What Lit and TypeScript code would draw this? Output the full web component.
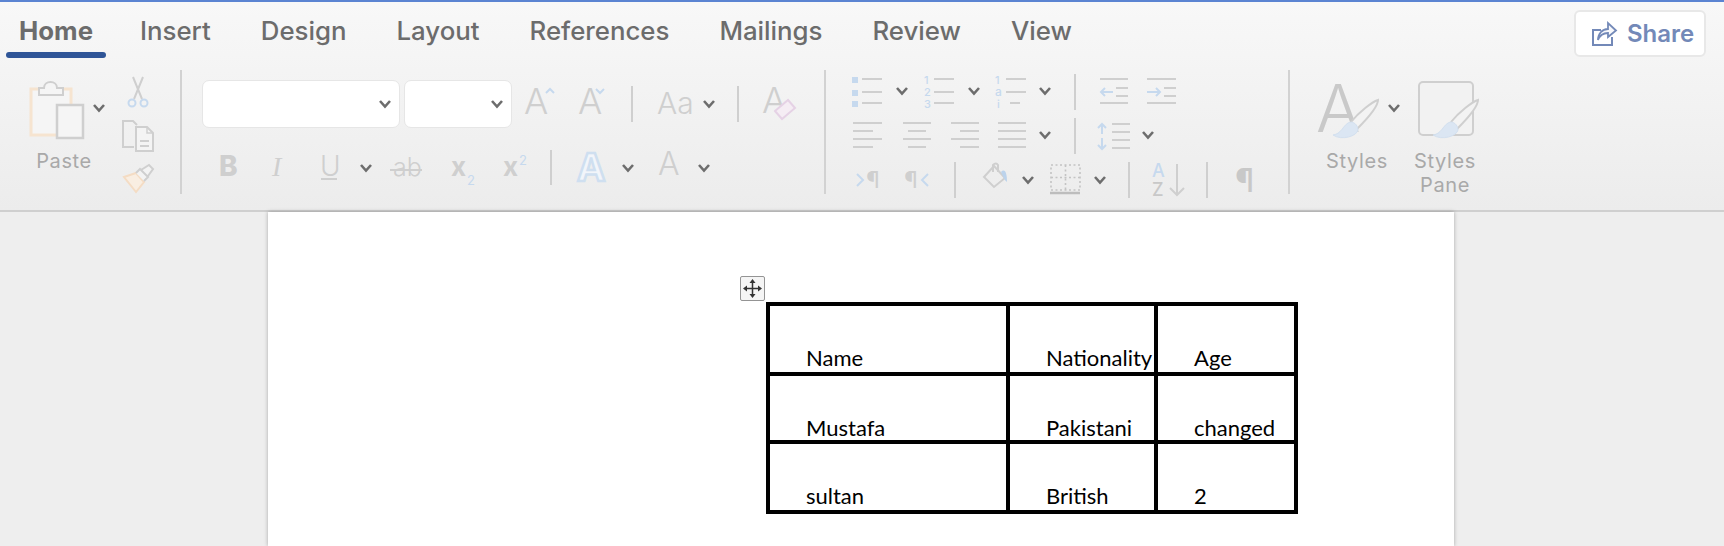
import { LitElement, css, html, svg } from 'lit';
import { customElement } from 'lit/decorators.js';

const TABS = ['Home', 'Insert', 'Design', 'Layout', 'References', 'Mailings', 'Review', 'View'];
const ROWS = [
  ['Name', 'Nationality', 'Age'],
  ['Mustafa', 'Pakistani', 'changed'],
  ['sultan', 'British', '2'],
];

const GRAY = '#cfcfcf';
const BLUE = '#c6d9ee';

// all ribbon icons are drawn in page coordinates, each svg's viewBox is its window on the page
const chev = (x: number, y: number) =>
  svg`<path d="M${x} ${y}l5 5.5l5-5.5" fill="none" stroke="#6d6d6d" stroke-width="2.6"/>`;
const vline = (x: number, y1: number, y2: number) =>
  svg`<path d="M${x} ${y1}V${y2}" stroke="${GRAY}" stroke-width="2"/>`;
const hlines = (x1: number, x2: number, ys: number[], color = GRAY) =>
  ys.map((y) => svg`<path d="M${x1} ${y}H${x2}" stroke="${color}" stroke-width="2"/>`);
const glyph = (x: number, y: number, size: number, text: string, fill = GRAY, weight = 300) =>
  svg`<text x="${x}" y="${y}" font-size="${size}" font-weight="${weight}" fill="${fill}">${text}</text>`;
const brush = (dx: number) => svg`<g transform="translate(${dx} 0)">
  <path d="M1351 122C1359 112 1372 102 1378 100C1378 106 1368 118 1357 129" fill="#f3f3f3" stroke="${GRAY}" stroke-width="2"/>
  <path d="M1333 135C1341 134 1343 126 1348 123C1353 120 1358 125 1358 130C1357 136 1342 141 1333 135Z" fill="#dbe6f3" stroke="#d3e0ef" stroke-width="1"/>
</g>`;

@customElement('app-root')
export class AppRoot extends LitElement {
  static styles = css`
    :host {
      display: block;
      width: 1724px;
      height: 546px;
      overflow: hidden;
      background: #eeeeee;
      font-family: Inter, 'Noto Sans', sans-serif;
    }
    svg {
      display: block;
      overflow: visible;
      flex: none;
    }
    svg text {
      font-family: Inter, 'Noto Sans', sans-serif;
    }
    svg text.serif {
      font-family: 'Liberation Serif', serif;
    }
    .top {
      border-top: 2px solid #5b84d2;
      border-bottom: 2px solid #cfcfcf;
      background: linear-gradient(#f8f8f8, #ececec);
      height: 208px;
    }
    .tabbar {
      display: flex;
      justify-content: space-between;
      height: 60px;
    }
    .tabs {
      display: flex;
      gap: 50px;
      padding-left: 19px;
      font-size: 25.8px;
      font-weight: 500;
      color: #6c6c6c;
    }
    .tab {
      position: relative;
      line-height: 30px;
      padding-top: 14px;
    }
    .tab.active {
      font-weight: 700;
      margin-right: -3px;
    }
    .tab.active::after {
      content: '';
      position: absolute;
      left: -13px;
      right: -13px;
      top: 50px;
      height: 6px;
      border-radius: 3px;
      background: #2f5597;
    }
    .share {
      display: flex;
      align-items: center;
      gap: 11px;
      box-sizing: border-box;
      width: 132px;
      height: 47px;
      margin: 8px 18px 0 0;
      padding-left: 16px;
      background: #fff;
      border: 2px solid #e8e8e8;
      border-radius: 6px;
      color: #7389b8;
      font-size: 24px;
      font-weight: 600;
    }
    .ribbon {
      display: flex;
      height: 124px;
      margin-top: 8px;
    }
    .group {
      box-sizing: border-box;
      height: 124px;
      border-right: 2px solid #d2d2d2;
      flex: none;
    }
    .clip {
      display: flex;
      width: 182px;
    }
    .paste {
      width: 122px;
    }
    .label {
      font-size: 20px;
      line-height: 24px;
      letter-spacing: 0.6px;
      color: #a9a9a9;
      text-align: center;
    }
    .paste .label {
      width: 128px;
    }
    .font {
      width: 644px;
      padding: 10px 0 0 20px;
    }
    .font-top {
      display: flex;
      height: 47px;
    }
    .select {
      display: flex;
      align-items: center;
      justify-content: flex-end;
      box-sizing: border-box;
      height: 48px;
      margin-right: 4px;
      padding-right: 8px;
      background: #fff;
      border: 1px solid #e6e6e6;
      border-radius: 7px;
    }
    .select.face {
      width: 199px;
    }
    .select.size {
      width: 109px;
      margin-right: 0;
    }
    .font-bottom {
      margin-top: 23px;
    }
    .para {
      width: 464px;
    }
    .styles {
      display: flex;
      gap: 10px;
      padding-left: 28px;
    }
    .style-btn {
      width: 78px;
    }
    .page {
      box-sizing: border-box;
      width: 1186px;
      height: 334px;
      margin-left: 268px;
      padding: 90px 0 0 498px;
      background: #fff;
      box-shadow: 0 0 4px rgba(0, 0, 0, 0.3);
    }
    .table-wrap {
      position: relative;
      width: 532px;
    }
    .handle {
      position: absolute;
      left: -26px;
      top: -26px;
      box-sizing: border-box;
      width: 25px;
      height: 25px;
      display: flex;
      align-items: center;
      justify-content: center;
      background: #f5f5f5;
      border: 1.5px solid #949494;
      border-radius: 2px;
    }
    .table {
      display: grid;
      grid-template-columns: 236px 144px 136px;
      grid-template-rows: 66px 64px 66px;
      gap: 4px;
      padding: 4px;
      width: 532px;
      box-sizing: border-box;
      background: #000;
      font-family: Lato, 'Open Sans', sans-serif;
      font-size: 22px;
      line-height: 24px;
      color: #000;
    }
    .cell {
      display: flex;
      align-items: flex-end;
      padding: 0 0 2.5px 36px;
      background: #fff;
      white-space: nowrap;
    }
    .cell.mid {
      padding-bottom: 0.5px;
    }
  `;

  render() {
    return html`
      <div class="top">
        <div class="tabbar">
          <div class="tabs">
            ${TABS.map((t, i) => html`<div class="tab ${i === 0 ? 'active' : ''}">${t}</div>`)}
          </div>
          <div class="share">
            <svg width="24" height="26" viewBox="1591 22 24 26">
              <path d="M1600 31H1592V46H1611V38" fill="none" stroke="#7389b8" stroke-width="2"/>
              <path d="M1597 41C1597 35 1601 30 1607 30V24L1615 31.500L1607 38V34C1603 34 1599 36 1597 41Z" fill="#f7f8fb" stroke="#7389b8" stroke-width="1.800"/>
            </svg>
            Share
          </div>
        </div>
        <div class="ribbon">
          <div class="group clip">
            <div class="paste">
              <svg width="122" height="79" viewBox="0 70 122 79">
                <rect x="31" y="89" width="40" height="46" fill="#f5f5f5" stroke="#f6e4d0" stroke-width="3"/>
                <path d="M39 95V88H44C44 80 57 80 57 88H63V95Z" fill="#f5f5f5" stroke="${GRAY}" stroke-width="2"/>
                <rect x="57" y="105" width="26" height="33" fill="#f5f5f5" stroke="${GRAY}" stroke-width="2.500"/>
                ${chev(94, 105)}
              </svg>
              <div class="label">Paste</div>
            </div>
            <svg width="58" height="124" viewBox="122 70 58 124">
              <path d="M133 77L142 99M143 77L134 99" stroke="${GRAY}" stroke-width="2" fill="none"/>
              <circle cx="132" cy="103" r="3.500" fill="none" stroke="${BLUE}" stroke-width="2"/>
              <circle cx="144" cy="103" r="3.500" fill="none" stroke="${BLUE}" stroke-width="2"/>
              <path d="M134 147H123V121H133L137 125" fill="none" stroke="${GRAY}" stroke-width="2"/>
              <path d="M136 127H147L153 133V151H136Z" fill="#f4f4f4" stroke="${GRAY}" stroke-width="2"/>
              <path d="M147 127V133H153" fill="none" stroke="${GRAY}" stroke-width="1.500"/>
              ${hlines(140, 149, [141, 146])}
              <path d="M124 177L136 173L144 182L136 192Z" fill="#f9eee2" stroke="#f4dcc4" stroke-width="2"/>
              <path d="M136 173L140 169L148 177L144 181M141 170L149 165L153 169L148 176" fill="#f3f3f3" stroke="${GRAY}" stroke-width="2"/>
            </svg>
          </div>

          <div class="group font">
            <div class="font-top">
              <div class="select face">
                <svg width="12" height="8" viewBox="378 100 12 8">${chev(379, 101)}</svg>
              </div>
              <div class="select size">
                <svg width="12" height="8" viewBox="491 100 12 8">${chev(492, 101)}</svg>
              </div>
              <svg width="312" height="47" viewBox="513 80 312 47">
                ${glyph(525, 114, 36, 'A')}
                <path d="M547 93l4-4l4 4" fill="none" stroke="${BLUE}" stroke-width="2"/>
                ${glyph(579, 114, 36, 'A')}
                <path d="M597 89l4 4l4-4" fill="none" stroke="${BLUE}" stroke-width="2"/>
                ${vline(633, 86, 122)}
                ${glyph(658, 114, 30, 'Aa')}
                ${chev(705, 101)}
                ${vline(739, 86, 122)}
                ${glyph(763, 113, 36, 'A')}
                <path d="M776 111L789 100L796 108L783 119Z" fill="#f5edf4" stroke="#e5d2e5" stroke-width="2"/>
              </svg>
            </div>
            <div class="font-bottom">
              <svg width="622" height="40" viewBox="202 150 622 40">
                ${glyph(219, 176, 28, 'B', GRAY, 800)}
                <text class="serif" x="272" y="176" font-size="28" font-style="italic" fill="${GRAY}">I</text>
                ${glyph(320, 176, 28, 'U')}
                <path d="M321 179H337" stroke="${GRAY}" stroke-width="2"/>
                ${chev(361, 165)}
                ${glyph(393, 176, 25, 'ab')}
                <path d="M390 170H422" stroke="${GRAY}" stroke-width="2"/>
                ${glyph(451, 176, 26, 'x', GRAY, 700)}
                ${glyph(467, 185, 13, '2', BLUE, 400)}
                ${glyph(503, 176, 26, 'x', GRAY, 700)}
                ${glyph(519, 165, 13, '2', BLUE, 400)}
                ${vline(551, 150, 185)}
                <text x="577" y="181" font-size="38" font-weight="700" fill="#f2f5fa" stroke="#cfdff0" stroke-width="2.500">A</text>
                ${chev(623, 165)}
                ${glyph(658, 175, 32, 'A')}
                ${chev(699, 165)}
              </svg>
            </div>
          </div>

          <div class="group para">
            <svg width="462" height="124" viewBox="826 70 462 124">
              <rect x="852" y="77" width="6" height="6" fill="${BLUE}"/>
              <rect x="852" y="90" width="6" height="6" fill="${BLUE}"/>
              <rect x="852" y="101" width="6" height="6" fill="${BLUE}"/>
              ${hlines(862, 882, [79, 92, 103])}
              ${chev(897, 88)}
              ${glyph(924, 84, 11, '1', BLUE, 500)} ${glyph(924, 96, 11, '2', BLUE, 500)} ${glyph(924, 108, 11, '3', BLUE, 500)}
              ${hlines(934, 954, [79, 92, 103])}
              ${chev(969, 88)}
              ${glyph(995, 84, 11, '1', BLUE, 500)} ${glyph(995, 96, 12, 'a', BLUE, 500)} ${glyph(997, 108, 11, 'i', BLUE, 500)}
              ${hlines(1006, 1026, [79, 92])}
              ${hlines(1010, 1020, [103])}
              ${chev(1040, 88)}
              ${vline(1075, 74, 110)}
              ${hlines(1100, 1128, [79, 103])}
              ${hlines(1116, 1128, [88, 96])}
              <path d="M1113 92H1101M1105 88L1101 92L1105 96" fill="none" stroke="${BLUE}" stroke-width="2"/>
              ${hlines(1147, 1176, [79, 103])}
              ${hlines(1164, 1176, [88, 96])}
              <path d="M1147 92H1160M1156 88L1160 92L1156 96" fill="none" stroke="${BLUE}" stroke-width="2"/>

              ${hlines(853, 882, [123, 139])} ${hlines(853, 873, [131, 147])}
              ${hlines(903, 931, [123, 139])} ${hlines(908, 926, [131, 147])}
              ${hlines(951, 979, [123, 139])} ${hlines(960, 979, [131, 147])}
              ${hlines(998, 1026, [123, 131, 139, 147])}
              ${chev(1040, 132)}
              ${vline(1075, 118, 154)}
              <path d="M1102 124V134M1098 128L1102 124L1106 128M1102 138V149M1098 145L1102 149L1106 145" fill="none" stroke="${BLUE}" stroke-width="2"/>
              ${hlines(1112, 1130, [124, 132, 140, 148])}
              ${chev(1143, 132)}

              <path d="M857 174L863 180L857 186" fill="none" stroke="${BLUE}" stroke-width="2"/>
              ${glyph(866, 188, 23, '¶', GRAY, 400)}
              ${glyph(904, 188, 23, '¶', GRAY, 400)}
              <path d="M928 174L922 180L928 186" fill="none" stroke="${BLUE}" stroke-width="2"/>
              ${vline(955, 162, 198)}
              <path d="M984 177L994 166L1005 178L994 187Z" fill="none" stroke="${GRAY}" stroke-width="2"/>
              <path d="M993 172V165Q996 162 998 165V172" fill="none" stroke="${GRAY}" stroke-width="2"/>
              <path d="M1001 172C1005 168 1007 173 1007 182C1004 180 1003 176 1001 172Z" fill="#bcd3ec"/>
              ${chev(1023, 177)}
              <path d="M1051 165H1080V190H1051ZM1065.500 165V190M1051 177.500H1080" fill="none" stroke="#c4c4c4" stroke-width="1.600" stroke-dasharray="2 2.500"/>
              <path d="M1050 193H1080" stroke="#bdbdbd" stroke-width="2.500"/>
              ${chev(1095, 177)}
              ${vline(1129, 162, 198)}
              ${glyph(1152, 176.500, 18, 'A', BLUE, 500)}
              ${glyph(1152, 196, 18, 'Z', '#c8c8c8', 500)}
              <path d="M1177 164V195M1170 188L1177 195L1184 188" fill="none" stroke="${GRAY}" stroke-width="2"/>
              ${vline(1207, 162, 198)}
              ${glyph(1235, 192, 32, '¶', '#c8c8c8', 500)}
            </svg>
          </div>

          <div class="styles">
            <div class="style-btn">
              <svg width="78" height="79" viewBox="1318 70 78 79">
                ${glyph(1316, 132, 66, 'A', '#c9c9c9', 300)}
                ${brush(0)}
                ${chev(1389, 105)}
              </svg>
              <div class="label">Styles</div>
            </div>
            <div class="style-btn">
              <svg width="78" height="79" viewBox="1406 70 78 79">
                <rect x="1419" y="82" width="54" height="53" rx="4" fill="#f2f2f2" stroke="${GRAY}" stroke-width="2"/>
                ${brush(100)}
              </svg>
              <div class="label">Styles<br />Pane</div>
            </div>
          </div>
        </div>
      </div>
      <div class="page">
        <div class="table-wrap">
          <div class="handle">
            <svg width="19" height="19" viewBox="0 0 19 19">
              <path d="M9.500 2V17M2 9.500H17" stroke="#333" stroke-width="1.500"/>
              <path d="M9.500 0L12.500 4H6.500ZM9.500 19L12.500 15H6.500ZM0 9.500L4 6.500V12.500ZM19 9.500L15 6.500V12.500Z" fill="#333"/>
            </svg>
          </div>
          <div class="table">
            ${ROWS.map((r, i) => r.map((c) => html`<div class="cell ${i === 1 ? 'mid' : ''}">${c}</div>`))}
          </div>
        </div>
      </div>
    `;
  }
}
